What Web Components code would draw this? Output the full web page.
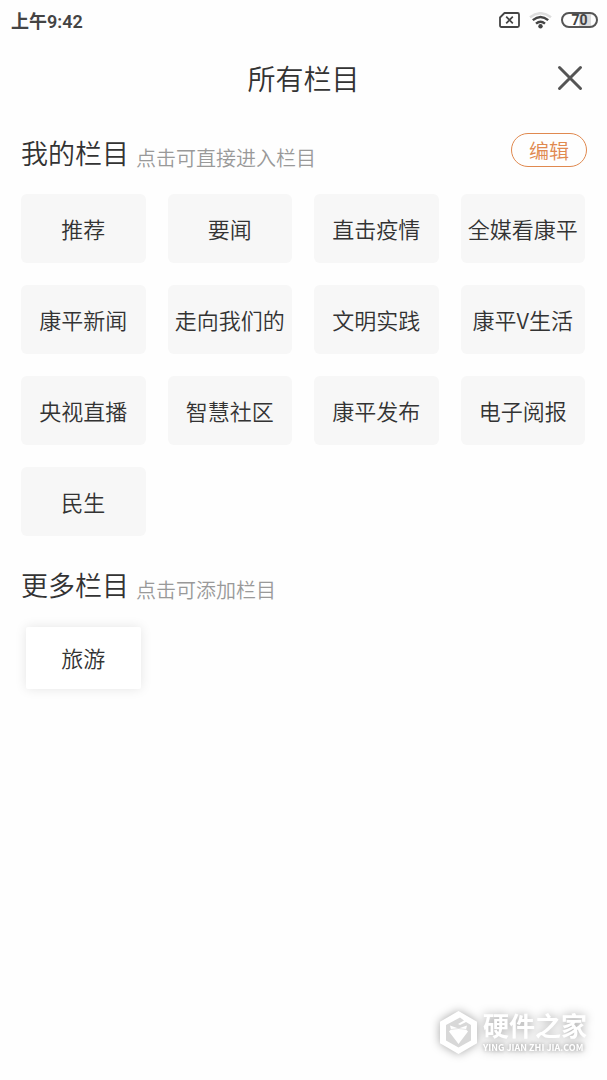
<!DOCTYPE html>
<html lang="zh-CN">
<head>
<meta charset="utf-8">
<meta name="viewport" content="width=device-width, initial-scale=1">
<title>所有栏目</title>
<style>
    body {
        margin: 0;
        background: #fefefe;
        color: #333;
        font-family: Roboto, "Noto Sans CJK SC", sans-serif;
    }
</style>
</head>
<body>
<channel-page>
    <status-bar slot="status" time="上午9:42" battery="70"></status-bar>
    <page-header slot="header">所有栏目</page-header>
    <channel-section heading="我的栏目" hint="点击可直接进入栏目" action="编辑">
        <channel-tile>推荐</channel-tile>
        <channel-tile>要闻</channel-tile>
        <channel-tile>直击疫情</channel-tile>
        <channel-tile>全媒看康平</channel-tile>
        <channel-tile>康平新闻</channel-tile>
        <channel-tile>走向我们的</channel-tile>
        <channel-tile>文明实践</channel-tile>
        <channel-tile>康平V生活</channel-tile>
        <channel-tile>央视直播</channel-tile>
        <channel-tile>智慧社区</channel-tile>
        <channel-tile>康平发布</channel-tile>
        <channel-tile>电子阅报</channel-tile>
        <channel-tile>民生</channel-tile>
    </channel-section>
    <channel-section heading="更多栏目" hint="点击可添加栏目">
        <channel-tile raised>旅游</channel-tile>
    </channel-section>
    <site-mark slot="footer" name="硬件之家" site="YING JIAN ZHI JIA.COM"></site-mark>
</channel-page>

<script>
class BaseElement extends HTMLElement {
    constructor() {
        super();
        this.attachShadow({ mode: "open" });
    }

    connectedCallback() {
        this.shadowRoot.innerHTML = this.render();
    }
}

customElements.define(
    "channel-page",
    class extends BaseElement {
        render() {
            return `
<style>
    :host { display: flex; flex-direction: column; min-height: 100vh; }
    main { display: block; padding: 0 22px 0 21px; }
    footer { display: flex; justify-content: flex-end; margin-top: auto; padding: 20px 20px 26px; }
</style>
<slot name="status"></slot>
<slot name="header"></slot>
<main><slot></slot></main>
<footer><slot name="footer"></slot></footer>`;
        }
    }
);

customElements.define(
    "status-bar",
    class extends BaseElement {
        render() {
            return `
<style>
    :host {
        display: flex;
        align-items: center;
        justify-content: space-between;
        height: 40px;
        padding: 0 9px 0 11px;
        color: #444;
        font-size: 18px;
    }
    .time { font-weight: 600; }
    .icons { display: flex; align-items: center; gap: 9px; }
    svg { display: block; }
    .battery {
        box-sizing: border-box;
        width: 37px;
        height: 16px;
        border: 2px solid #555;
        border-radius: 8px;
        background: linear-gradient(90deg, #fefefe 50%, #ddd 50%, #ddd 86%, #fefefe 86%);
        font-size: 14px;
        font-weight: 700;
        line-height: 13px;
        text-align: center;
    }
</style>
<span class="time">${this.getAttribute("time")}</span>
<div class="icons">
    <svg width="21" height="16" viewBox="0 0 21 16" fill="none" stroke="#444" aria-hidden="true">
        <path d="M5.5 1H18.5Q20 1 20 2.500V13.500Q20 15 18.500 15H2.500Q1 15 1 13.500V5.500Z" stroke-width="1.800" stroke-linejoin="round"/>
        <path d="M7.200 4.700L13.800 11.300M13.800 4.700L7.200 11.300" stroke-width="1.700"/>
    </svg>
    <svg width="23" height="17" viewBox="0 0 23 17" fill="none" aria-hidden="true">
        <path d="M1 5.200Q11.500 -2.800 22 5.200" stroke="#ddd" stroke-width="2.400"/>
        <path d="M3.800 8.200Q11.500 1.800 19.200 8.200M7 11.600Q11.500 7.800 16 11.600" stroke="#444" stroke-width="2.400"/>
        <circle cx="11.500" cy="14.200" r="2.200" fill="#444"/>
    </svg>
    <div class="battery">${this.getAttribute("battery")}</div>
</div>`;
        }
    }
);

customElements.define(
    "page-header",
    class extends BaseElement {
        render() {
            return `
<style>
    :host {
        display: grid;
        grid-template-columns: 1fr auto 1fr;
        align-items: center;
        height: 76px;
        padding: 0 24px;
    }
    h1 { grid-column: 2; margin: 0; padding-top: 6px; font-size: 28px; font-weight: 350; line-height: 40px; }
    button { justify-self: end; padding: 0; border: 0; background: none; }
    svg { display: block; }
</style>
<h1><slot></slot></h1>
<button type="button" aria-label="关闭">
    <svg width="26" height="26" viewBox="0 0 26 26" fill="none" stroke="#555" stroke-width="3" stroke-linecap="round">
        <path d="M2.500 2.500L23.500 23.500M23.500 2.500L2.500 23.500"/>
    </svg>
</button>`;
        }
    }
);

customElements.define(
    "channel-section",
    class extends BaseElement {
        render() {
            const action = this.getAttribute("action");
            return `
<style>
    :host { display: block; margin-bottom: 12px; }
    header { display: flex; align-items: center; height: 78px; }
    .titles { display: flex; align-items: flex-end; gap: 7px; flex: 1; }
    h2 { margin: 0; font-size: 27px; font-weight: 350; line-height: 40px; }
    p { margin: 0; color: #999; font-size: 20px; font-weight: 350; line-height: 32px; }
    button {
        box-sizing: border-box;
        width: 76px;
        height: 34px;
        margin: 0 -2px 10px 0;
        padding: 4px 0 0;
        border: 1px solid #e0894f;
        border-radius: 17px;
        background: none;
        color: #e0894f;
        font: inherit;
        font-size: 20px;
        font-weight: 350;
        line-height: 28px;
    }
    .tiles { display: grid; grid-template-columns: repeat(4, minmax(0, 1fr)); gap: 22px; }
</style>
<section>
    <header>
        <div class="titles">
            <h2>${this.getAttribute("heading")}</h2>
            <p>${this.getAttribute("hint")}</p>
        </div>
        ${action ? `<button type="button">${action}</button>` : ""}
    </header>
    <div class="tiles"><slot></slot></div>
</section>`;
        }
    }
);

customElements.define(
    "channel-tile",
    class extends BaseElement {
        render() {
            return `
<style>
    :host { display: flex; height: 69px; }
    button {
        flex: 1;
        min-width: 0;
        padding: 0 0 2px;
        border: 0;
        border-radius: 6px;
        background: #f7f7f7;
        color: inherit;
        font-family: "Noto Sans CJK SC", sans-serif;
        font-size: 22px;
        font-weight: 350;
        line-height: 32px;
        white-space: nowrap;
    }
    :host([raised]) button {
        margin: 1px 5px 6px;
        border-radius: 2px;
        background: #fff;
        box-shadow: 0 0 12px rgba(0, 0, 0, 0.1);
    }
</style>
<button type="button"><slot></slot></button>`;
        }
    }
);

customElements.define(
    "site-mark",
    class extends BaseElement {
        render() {
            return `
<style>
    :host {
        display: flex;
        align-items: center;
        gap: 6px;
        color: #fff;
        filter: drop-shadow(0 0 5px rgba(0, 0, 0, 0.35));
    }
    svg { display: block; }
    .name { font-size: 26px; font-weight: 700; line-height: 30px; }
    .site {
        font-family: "Noto Sans CJK SC", sans-serif;
        font-size: 9px;
        font-weight: 700;
        line-height: 12px;
        white-space: nowrap;
        text-shadow: 0 0 4px rgba(0, 0, 0, 0.4);
    }
</style>
<svg width="37" height="43" viewBox="0 0 37 43" aria-hidden="true">
    <path fill="#d8d8d8" d="M18.500 4L34 12V31L18.500 39L3 31V12Z"/>
    <path fill="#fff" fill-rule="evenodd" d="M18.500 0L37 10.700V32.300L18.500 43L0 32.300V10.700ZM20 6.500L6 14V29.500L18.500 36.500L31 29.500V14L26 11L20 14L18 13L24 9.500Z"/>
    <path fill="#fff" d="M10 14.500L18.500 17.500L27 14.500L26 18.500L28 20.500L18.500 33L9 20.500L11 18.500Z"/>
    <path fill="none" stroke="#d8d8d8" stroke-width="0.700" d="M11 18.500L18.500 17.500L26 18.500"/>
</svg>
<div>
    <div class="name">${this.getAttribute("name")}</div>
    <div class="site">${this.getAttribute("site")}</div>
</div>`;
        }
    }
);
</script>
</body>
</html>
